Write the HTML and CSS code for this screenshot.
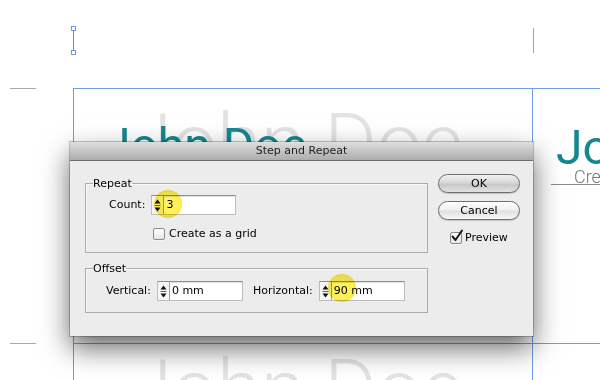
FILE: index.html
```html
<!DOCTYPE html>
<html>
<head>
<meta charset="utf-8">
<title>Step and Repeat</title>
<link rel="stylesheet" href="styles.css">
</head>
<body>
<div class="canvas">
  <div class="ghost t1">John Doe</div>
  <div class="ghost t2">John Doe</div>
  <div class="name n1">John Doe</div>
  <div class="name n2">John Doe</div>
  <div class="sub s2">Creative</div>
  <div class="rule r2"></div>
  <div class="cursor"><span class="handle top"></span><span class="handle bottom"></span></div>
  <div class="mark-v"></div>
  <div class="mark-h m1"></div>
  <div class="mark-h m2"></div>
  <div class="guide gh g1"></div>
  <div class="guide gh g2"></div>
  <div class="guide gv g3"></div>
  <div class="guide gv g4"></div>
</div>

<div class="dialog">
  <div class="titlebar">Step and Repeat</div>
  <div class="dlg-body">
    <div class="groups">
      <fieldset class="group repeat">
        <legend>Repeat</legend>
        <div class="row count-row">
          <span class="lbl">Count:</span>
          <div class="field">
            <span class="spin"><svg width="7" height="15" viewBox="0 0 7 15"><path d="M3.5 1.5L6.5 5.5H0.5Z M3.5 13.5L6.5 9.5H0.5Z" fill="#111"/><path d="M0.5 7.5H6.5" stroke="#666" stroke-width="1"/></svg></span>
            <span class="val">3</span>
            <span class="hl hl-count"></span>
          </div>
        </div>
        <div class="check grid-check"><span class="cb"></span><span>Create as a grid</span></div>
      </fieldset>
      <fieldset class="group offset">
        <legend>Offset</legend>
        <div class="row offset-row">
          <span class="lbl">Vertical:</span>
          <div class="field">
            <span class="spin"><svg width="7" height="15" viewBox="0 0 7 15"><path d="M3.5 1.5L6.5 5.5H0.5Z M3.5 13.5L6.5 9.5H0.5Z" fill="#111"/><path d="M0.5 7.5H6.5" stroke="#666" stroke-width="1"/></svg></span>
            <span class="val">0 mm</span>
          </div>
          <span class="lbl lbl-h">Horizontal:</span>
          <div class="field">
            <span class="spin"><svg width="7" height="15" viewBox="0 0 7 15"><path d="M3.5 1.5L6.5 5.5H0.5Z M3.5 13.5L6.5 9.5H0.5Z" fill="#111"/><path d="M0.5 7.5H6.5" stroke="#666" stroke-width="1"/></svg></span>
            <span class="val">90 mm</span>
            <span class="hl hl-horiz"></span>
          </div>
        </div>
      </fieldset>
    </div>
    <div class="actions">
      <button class="btn ok">OK</button>
      <button class="btn cancel">Cancel</button>
      <div class="check preview">
        <span class="cb checked"><svg class="tick" width="14" height="14" viewBox="0 0 14 14"><path d="M2.5 7.5L5.5 11L12 1.5" fill="none" stroke="#1a1a1a" stroke-width="2" stroke-linecap="round" stroke-linejoin="round"/></svg></span>
        <span>Preview</span>
      </div>
    </div>
  </div>
</div>
</body>
</html>
```

FILE: styles.css
```css
* { box-sizing: border-box; }
html, body { margin: 0; padding: 0; }
body {
  width: 600px;
  height: 380px;
  overflow: hidden;
  background: #fff;
  position: relative;
  font-family: "DejaVu Sans", "Liberation Sans", sans-serif;
  font-size: 11px;
  color: #000;
}

/* ---------- document canvas ---------- */
.canvas { position: absolute; left: 0; top: 0; width: 600px; height: 380px; overflow: hidden; }

.ghost {
  position: absolute;
  font-family: Roboto, "DejaVu Sans", sans-serif;
  font-weight: 300;
  font-size: 80px;
  line-height: 1;
  color: #e3e3e3;
  white-space: nowrap;
}
.t1 { left: 128px; top: 103px; }
.t2 { left: 128px; top: 349px; }

.name {
  position: absolute;
  font-family: Roboto, "DejaVu Sans", sans-serif;
  font-size: 48px;
  line-height: 1;
  color: #16878f;
  white-space: nowrap;
}
.n1 { left: 104px; top: 122px; }
.n2 { left: 556px; top: 124px; }

.sub {
  position: absolute;
  font-family: Roboto, "DejaVu Sans", sans-serif;
  font-weight: 300;
  font-size: 18px;
  line-height: 1;
  color: #777;
  white-space: nowrap;
}
.s2 { left: 574px; top: 168px; }
.rule { position: absolute; height: 1px; background: #8a8a8a; }
.r2 { left: 551px; top: 184px; width: 49px; }

.cursor { position: absolute; left: 71px; top: 26px; width: 5px; height: 29px; }
.cursor::before {
  content: "";
  position: absolute;
  left: 2px; top: 5px; bottom: 5px;
  width: 1px;
  background: #5b8ede;
}
.handle {
  position: absolute;
  left: 0;
  width: 5px; height: 5px;
  border: 1px solid #6a9be2;
  background: #fff;
}
.handle.top { top: 0; }
.handle.bottom { bottom: 0; }

.mark-v { position: absolute; left: 533px; top: 28px; width: 1px; height: 25px; background: #a3a3a3; }
.mark-h { position: absolute; left: 10px; width: 26px; height: 1px; background: #a8a8a8; }
.m1 { top: 88px; }
.m2 { top: 343px; }

.guide { position: absolute; background: #6f9ee3; }
.gh { left: 73px; right: 0; height: 1px; }
.g1 { top: 88px; }
.g2 { top: 343px; }
.gv { top: 88px; bottom: 0; width: 1px; }
.g3 { left: 73px; }
.g4 { left: 532px; }

/* ---------- dialog ---------- */
.dialog {
  position: absolute;
  left: 70px;
  top: 142px;
  width: 463px;
  height: 194px;
  background: #ececec;
  box-shadow: 0 0 0 1px rgba(0,0,0,.22), 0 12px 26px rgba(0,0,0,.6);
  display: flex;
  flex-direction: column;
}
.titlebar {
  height: 19px;
  flex: none;
  border-bottom: 1px solid #6c6c6c;
  background: linear-gradient(#dedede, #acacac);
  text-align: center;
  line-height: 18px;
  color: #1e1e1e;
}
.dlg-body {
  flex: 1;
  display: flex;
  gap: 10px;
  padding: 0 13px 0 15px;
}

.groups { width: 343px; padding-top: 16px; }
.group {
  margin: 0;
  min-width: 0;
  border: 1px solid #ababab;
  box-shadow: inset 1px 1px 0 #f8f8f8;
}
.group legend {
  margin-left: 7px;
  padding: 0;
  line-height: 13px;
  font-size: 11px;
}
.repeat { padding: 5px 0 12px 0; }
.offset { margin-top: 9px; padding: 6px 0 11px 0; }

.row { display: flex; align-items: center; height: 20px; }
.count-row { padding-left: 23px; }
.offset-row { padding-left: 20px; }
.lbl { line-height: 20px; white-space: nowrap; }
.lbl-h { margin-left: 10px; }

.field {
  position: relative;
  display: flex;
  align-items: stretch;
  width: 86px;
  height: 20px;
  margin-left: 6px;
  background: #fff;
  border: 1px solid #bdbdbd;
  border-top-color: #8f8f8f;
  box-shadow: inset 0 1px 0 #e2e2e2;
}
.count-row .field { width: 85px; }
.spin {
  width: 12px;
  flex: none;
  display: flex;
  align-items: center;
  justify-content: center;
  border-right: 1px solid #a0a0a0;
  background: #f6f6f6;
}
.val { padding-left: 2px; line-height: 18px; white-space: nowrap; }

.hl {
  position: absolute;
  width: 28px;
  height: 28px;
  border-radius: 50%;
  background: radial-gradient(circle, #fff464 0%, #fcee55 60%, #f3dd3c 84%, rgba(243,221,60,0) 100%);
  mix-blend-mode: multiply;
  pointer-events: none;
}
.hl-count { left: 2px; top: -6px; }
.hl-horiz { left: 8px; top: -8px; }

.check { display: flex; align-items: center; gap: 4px; height: 13px; line-height: 13px; white-space: nowrap; }
.grid-check { margin-top: 12px; padding-left: 67px; }

.cb {
  position: relative;
  flex: none;
  width: 12px;
  height: 12px;
  border: 1px solid #8a8a8a;
  border-radius: 2px;
  background: linear-gradient(#ffffff, #e6e6e6);
  box-shadow: 0 1px 0 rgba(255,255,255,.6);
}
.tick { position: absolute; left: -1px; top: -4px; }

/* ---------- buttons column ---------- */
.actions {
  width: 82px;
  padding-top: 13px;
  display: flex;
  flex-direction: column;
}
.btn {
  display: block;
  width: 82px;
  height: 19px;
  padding: 0;
  border: 1px solid #6e6e6e;
  border-radius: 10px;
  font: 11px "DejaVu Sans", "Liberation Sans", sans-serif;
  line-height: 17px;
  color: #000;
  background: linear-gradient(#fefefe, #f0f0f0 45%, #e0e0e0 55%, #f7f7f7);
  box-shadow: 0 1px 1px rgba(0,0,0,.18);
}
.btn.ok { background: linear-gradient(#f0f0f0, #d9d9d9 45%, #c7c7c7 55%, #e2e2e2); }
.btn.cancel { margin-top: 8px; }
.preview { margin-top: 11px; padding-left: 12px; gap: 3px; }
```
